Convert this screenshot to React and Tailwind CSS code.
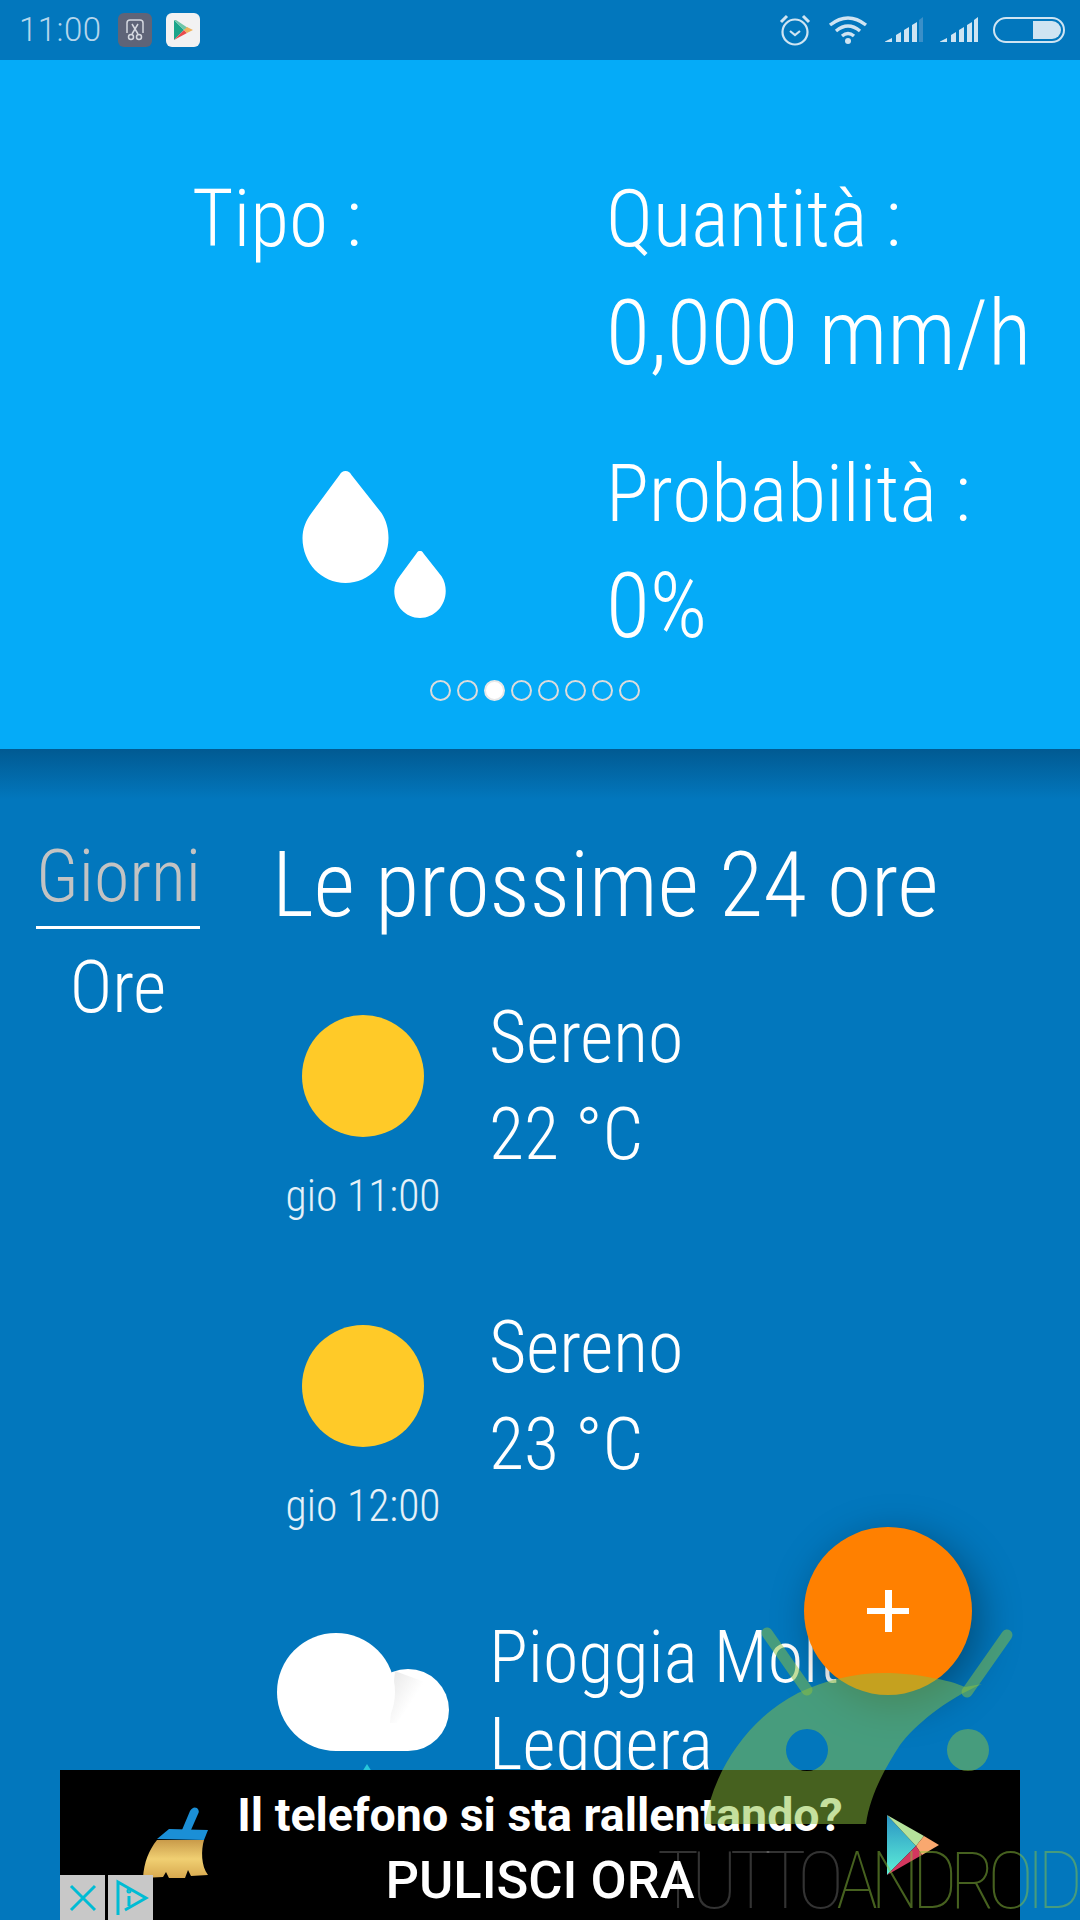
const cond = "font-['Roboto'] font-light font-stretch-condensed";

function Drop({ className }) {
  return (
    <svg viewBox="0 0 86 112" className={className}>
      <path d="M43 0 C46 0 47 1 49 4 L79 42 C84 50 86 58 86 67 C86 92 67 112 43 112 C19 112 0 92 0 67 C0 58 3 50 9 42 L37 4 C39 1 40 0 43 0Z" fill="#fff" />
    </svg>
  );
}

function Sun() {
  return <div className="w-[122px] h-[122px] rounded-full bg-[#FFCA28]" />;
}

function Hour({ name, temp, time }) {
  return (
    <div className="flex h-[310px]">
      <div className="w-[176px] mr-[38px] flex flex-col items-center pt-[26px]">
        <Sun />
        <div className="text-[43.5px] leading-[50px] mt-[35px] text-white/90 whitespace-nowrap">{time}</div>
      </div>
      <div className="text-[72px] leading-[97px] text-white">
        <div>{name}</div>
        <div>{temp}</div>
      </div>
    </div>
  );
}

function Bars({ faded }) {
  return (
    <svg width="38" height="26" viewBox="0 0 38 26">
      <path d="M0 25 H7 V21 L0 24.5Z M11 25 H16 V15 L11 18Z M19 25 H24 V10 L19 13Z M27 25 H32 V5 L27 8Z" fill="#cfe4f2" />
      <path d="M34 25 H38 V0 L34 3Z" fill={faded ? "#3a8fc8" : "#cfe4f2"} />
    </svg>
  );
}

export default function App() {
  return (
    <div className={`relative w-[1080px] h-[1920px] overflow-hidden bg-[#0277BD] text-white ${cond}`}>
      {/* status bar */}
      <div className="h-[60px] bg-[#0277BD] flex items-center pl-[19px] pr-[15px]">
        <span className="text-[33px] w-[99px] font-light font-stretch-normal text-[#b5d6ec] tracking-[0.5px]">11:00</span>
        <div className="w-[34px] h-[34px] rounded-[6px] bg-[#5f6478] flex items-center justify-center">
          <svg width="24" height="24" viewBox="0 0 24 24" fill="none" stroke="#d5d8e0" strokeWidth="1.5">
            <path d="M4 15 V5 Q4 2 7 2 H17 Q20 2 20 5 V15" />
            <circle cx="8" cy="19" r="2.5" />
            <circle cx="16" cy="19" r="2.5" />
            <path d="M9 16 L15 6 M15 16 L9 6" />
          </svg>
        </div>
        <div className="ml-[14px] w-[34px] h-[34px] rounded-[6px] bg-[#f2f2f2] flex items-center justify-center">
          <svg width="22" height="26" viewBox="0 0 22 26">
            <path d="M2 3 L12 13 L2 23Z" fill="#1ba58a" />
            <path d="M2 3 L4 3 L16 11 L12 13Z" fill="#6fc6a8" />
            <path d="M2 23 L12 13 L15 16Z" fill="#ea4b4b" />
            <path d="M12 13 L15 10 L21 13 L15 16Z" fill="#f0b35c" />
          </svg>
        </div>
        <div className="ml-auto flex items-center">
          <svg width="32" height="32" viewBox="0 0 32 32" fill="none" stroke="#cfe4f2" strokeWidth="2.2">
            <circle cx="16" cy="18" r="12.5" />
            <path d="M11 17 L16 21 L21 17" />
            <path d="M2 8 L8 2 M30 8 L24 2" strokeWidth="3" />
          </svg>
          <svg className="ml-[17px]" width="40" height="30" viewBox="0 0 40 30" fill="none" stroke="#cfe4f2" strokeWidth="3.4">
            <path d="M2 10 Q20 -4 38 10" />
            <path d="M8 16 Q20 6 32 16" />
            <path d="M14 21 Q20 16 26 21" />
            <circle cx="20" cy="26" r="3" fill="#cfe4f2" stroke="none" />
          </svg>
          <div className="ml-[17px] flex"><Bars faded /></div>
          <div className="ml-[17px] flex"><Bars /></div>
          <div className="ml-[15px] w-[72px] h-[26px] rounded-full border-2 border-[#cfe4f2] p-[2px] flex justify-end">
            <div className="w-[28px] h-full bg-[#cfe4f2] rounded-r-full" />
          </div>
        </div>
      </div>

      {/* top panel */}
      <div className="relative z-10 h-[689px] bg-[#05ABF8] flex flex-col">
        <div className="flex flex-1">
          <div className="w-[606px] flex flex-col">
            <div className="pl-[192px] pt-[113px] text-[79.5px] leading-[92px]">Tipo :</div>
            <div className="pl-[302px] pt-[206px]">
              <div className="relative w-[147px] h-[150px]">
                <Drop className="absolute left-0 top-0 w-[87px] h-[112px]" />
                <Drop className="absolute left-[92px] top-[80px] w-[52px] h-[67px]" />
              </div>
            </div>
          </div>
          <div className="flex-1 pt-[113px]">
            <div className="text-[79.5px] leading-[92px]">Quantità :</div>
            <div className="text-[90px] leading-[110px] mt-[14px] whitespace-nowrap">0,000 mm/h</div>
            <div className="text-[79.5px] leading-[92px] mt-[59px]">Probabilità :</div>
            <div className="text-[90px] leading-[110px] mt-[12px]">0%</div>
          </div>
        </div>
        <div className="flex justify-center gap-[6px] pb-[48px] pr-[10px]">
          {[0, 1, 2, 3, 4, 5, 6, 7].map((i) => (
            <div
              key={i}
              className={
                i === 2
                  ? "w-[21px] h-[21px] rounded-full bg-white border-2 border-[#e8e8e8]"
                  : "w-[21px] h-[21px] rounded-full border-[2.5px] border-[#dcdcdc]"
              }
            />
          ))}
        </div>
      </div>

      {/* lower part */}
      <div className="h-[50px] -mb-[50px] bg-gradient-to-b from-[#015a92] to-[#0277BD]" />
      <div className="relative flex pt-[82px]">
        <div className="w-[275px] shrink-0 pl-[36px]">
          <div className="w-[164px] text-center text-[72px] leading-[92px] text-[#c3c3c3] border-b-[3px] border-white pb-[3px]">Giorni</div>
          <div className="w-[164px] text-center text-[72px] leading-[118px]">Ore</div>
        </div>
        <div className="flex-1">
          <div className="text-[90px] leading-[110px] mb-[48px] -ml-[3px] whitespace-nowrap">Le prossime 24 ore</div>
          <Hour name="Sereno" temp="22 °C" time="gio 11:00" />
          <Hour name="Sereno" temp="23 °C" time="gio 12:00" />
          <div className="flex">
            <div className="w-[214px] pt-[24px] pl-[2px]">
              <svg width="172" height="140" viewBox="0 0 172 140">
                <defs>
                  <linearGradient id="sh" x1="0" y1="0" x2="1" y2="1">
                    <stop offset="0" stopColor="#e6e6e6" />
                    <stop offset="0.55" stopColor="#ffffff" />
                  </linearGradient>
                </defs>
                <circle cx="131" cy="77" r="41" fill="#fff" />
                <path d="M118 38 L150 50 L112 100Z" fill="url(#sh)" />
                <rect x="59" y="90" width="72" height="28" fill="#fff" />
                <circle cx="59" cy="59" r="59" fill="#fff" />
                <path d="M90 131 L95 139 L85 139Z" fill="#26C6DA" />
              </svg>
            </div>
            <div className="text-[72px] leading-[87px] pt-[5px] whitespace-nowrap">
              <div>Pioggia Molto</div>
              <div>Leggera</div>
            </div>
          </div>
        </div>
      </div>

      {/* FAB */}
      <div className="absolute z-20 left-[804px] top-[1527px] w-[168px] h-[168px] rounded-full bg-[#FF8000] shadow-[8px_10px_40px_rgba(0,0,0,0.35)] flex items-center justify-center">
        <div className="relative w-[42px] h-[42px]">
          <div className="absolute left-0 right-0 top-[18px] h-[6px] bg-white" />
          <div className="absolute top-0 bottom-0 left-[18px] w-[7px] bg-white" />
        </div>
      </div>

      {/* ad */}
      <div className="absolute z-20 left-[60px] top-[1770px] w-[960px] h-[150px] bg-black font-stretch-normal">
        <div className="text-center pt-[20px] text-[46.5px] leading-[50px] font-bold whitespace-nowrap">Il telefono si sta rallentando?</div>
        <div className="text-center pt-[12px] text-[52.5px] leading-[56px] font-medium whitespace-nowrap">PULISCI ORA</div>
        <svg className="absolute left-[83px] top-[37px]" width="66" height="72" viewBox="138 1807 66 72">
          <defs>
            <linearGradient id="br" x1="0" y1="0" x2="0" y2="1">
              <stop offset="0" stopColor="#c99b4a" />
              <stop offset="0.5" stopColor="#f0cf72" />
              <stop offset="1" stopColor="#d8a94f" />
            </linearGradient>
          </defs>
          <path d="M152 1840 C144 1850 139 1862 138 1878 L158 1877 L161 1872 L164 1878 L180 1878 L183 1870 L186 1876 L203 1875 C196 1866 196 1850 199 1840Z" fill="url(#br)" />
          <path d="M164 1829 L203 1830 L199 1840 L152 1839Z" fill="#1b8fd6" />
          <path d="M177 1830 L185 1811 Q188 1806 192 1808 Q195 1811 193 1814 L186 1830Z" fill="#1b8fd6" />
        </svg>
        <svg className="absolute left-[827px] top-[45px]" width="52" height="60" viewBox="0 0 52 60">
          <defs>
            <linearGradient id="pl" x1="0" y1="0" x2="0" y2="1">
              <stop offset="0" stopColor="#2a94c4" />
              <stop offset="1" stopColor="#5ef0d8" />
            </linearGradient>
          </defs>
          <path d="M0 0 L0 60 L29 31Z" fill="url(#pl)" />
          <path d="M0 0 L37 21 L29 31Z" fill="#b5e39c" />
          <path d="M37 21 L52 30 L35 40 L29 31Z" fill="#f9a86f" />
          <path d="M0 60 L35 40 L29 31Z" fill="#d3375f" />
        </svg>
        <div className="absolute left-0 bottom-0 flex gap-[3px]">
          <div className="w-[45px] h-[45px] bg-[#c8c8c8] flex items-center justify-center">
            <svg width="28" height="28" viewBox="0 0 28 28" stroke="#00bcd4" strokeWidth="3"><path d="M2 2 L26 26 M26 2 L2 26" /></svg>
          </div>
          <div className="w-[45px] h-[45px] bg-[#c8c8c8] flex items-center justify-center">
            <svg width="36" height="38" viewBox="0 0 36 38" fill="none" stroke="#00bcd4" strokeWidth="3">
              <path d="M5 36 V3 L33 19 L12 31" />
              <path d="M16 17 V27" />
              <circle cx="16" cy="12" r="1" />
            </svg>
          </div>
        </div>
      </div>

      {/* watermark */}
      <div className="absolute z-30 inset-0 pointer-events-none">
        <svg className="absolute left-[700px] top-[1625px]" width="340" height="210" viewBox="700 1625 340 210">
          <path
            fillRule="evenodd"
            d="M705 1824 C712 1775 745 1720 798 1693 C825 1680 855 1673 884 1673 C915 1673 950 1680 965 1687 L982 1684 C945 1700 915 1725 900 1745 C885 1768 870 1795 866 1824Z M828 1750 A21 21 0 1 0 786 1750 A21 21 0 1 0 828 1750Z"
            fill="#8cc23e"
            fillOpacity="0.5"
          />
          <path d="M767 1633 L807 1690" stroke="#8cc23e" strokeOpacity="0.5" strokeWidth="11" strokeLinecap="round" fill="none" />
          <path d="M1007 1635 L967 1692" stroke="#8cc23e" strokeOpacity="0.5" strokeWidth="11" strokeLinecap="round" fill="none" />
          <circle cx="968" cy="1750" r="21" fill="#8cc23e" fillOpacity="0.5" />
        </svg>
        <div className="absolute left-[657px] top-[1843px] flex text-[80px] leading-[76px] font-thin whitespace-nowrap">
          <span className="text-white/20 tracking-[-8px]">TUTTO</span>
          <span className="text-[#8cc23e]/50 tracking-[-8px]">ANDROID</span>
        </div>
      </div>
    </div>
  );
}
